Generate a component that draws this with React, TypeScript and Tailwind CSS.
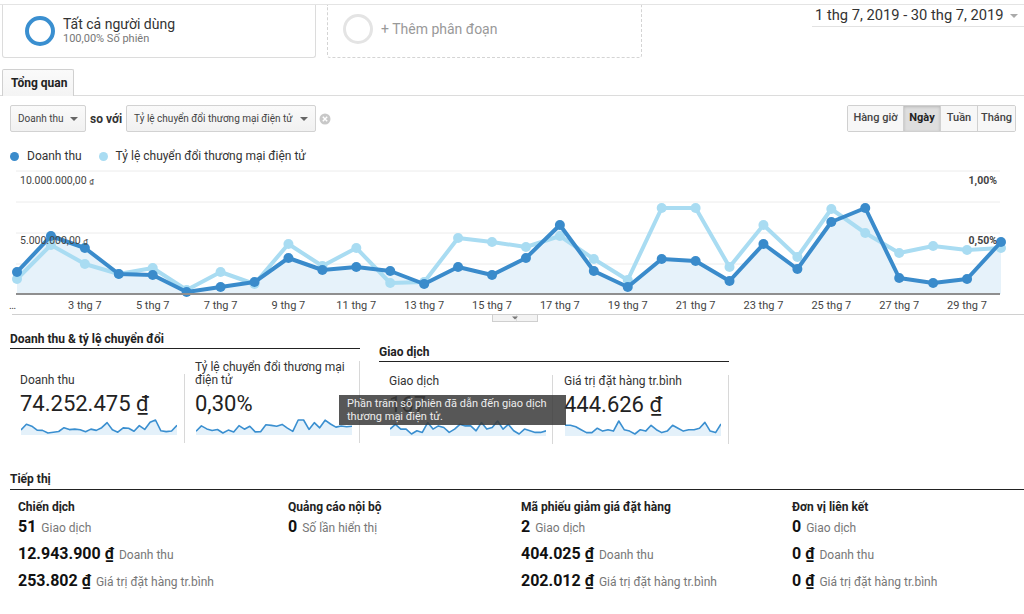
import React from 'react';

// daily points of the main chart, in page pixels (y)
const revenueY = [272, 236, 248, 274, 275, 292, 287, 282, 258, 270, 267, 271, 284, 267, 275, 258, 225, 271, 287, 259, 261, 281, 244, 269, 222, 208, 278, 283, 279, 242];
const rateY = [279, 245, 264, 274, 268, 290, 272, 284, 244, 266, 248, 283, 282, 238, 242, 247, 236, 259, 280, 208, 208, 267, 225, 257, 209, 233, 253, 246, 250, 248];

const TOP = 165;
const xAt = (i: number) => 17 + i * 33.93;

const sparkRevenue = revenueY.map((y) => 300 - y);
const sparkRate = rateY.map((y) => 300 - y);
const sparkTx = [6, 9, 6, 6, 3, 5, 4, 10, 6, 8, 7, 4, 6, 9, 8, 8, 5, 10, 6, 7, 11, 6, 9, 5, 3, 6, 5, 4, 4, 5];
const sparkAov = [9, 9, 8, 6, 4, 4, 7, 5, 6, 5, 12, 6, 5, 3, 6, 5, 9, 6, 4, 5, 9, 7, 5, 6, 6, 7, 11, 5, 4, 10];

const Sparkline = ({ data }: { data: number[] }) => {
  const w = 156;
  const h = 18;
  const min = Math.min(...data);
  const max = Math.max(...data);
  const pts = data.map((v, i) => {
    const x = (i / (data.length - 1)) * w;
    const y = h - 2 - ((v - min) / (max - min)) * (h - 5);
    return `${x.toFixed(1)},${y.toFixed(1)}`;
  });
  return (
    <svg width={w} height={h} className="ml-[1px] block">
      <polygon points={`0,${h} ${pts.join(' ')} ${w},${h}`} fill="#e4f1fa" />
      <polyline points={pts.join(' ')} fill="none" stroke="#3a8fd0" strokeWidth="1.6" strokeLinejoin="round" />
    </svg>
  );
};

const Caret = ({ color = 'border-t-[#666]' }: { color?: string }) => (
  <span className={`inline-block h-0 w-0 shrink-0 border-x-[4px] border-t-[4px] border-x-transparent ${color}`} />
);

const Select = ({ label, width }: { label: string; width: string }) => (
  <div className={`flex h-[27px] shrink-0 items-center justify-between whitespace-nowrap rounded-[2px] border border-[#d2d2d2] bg-gradient-to-b from-[#fafafa] to-[#f1f1f1] pl-[7px] pr-[7px] text-[10px] text-[#444] ${width}`}>
    <span>{label}</span>
    <Caret />
  </div>
);

const Scorecard = ({ label, value, data, className }: { label: React.ReactNode; value: string; data: number[]; className: string }) => (
  <div className={`flex flex-col border-r border-[#d8d8d8] pb-[8px] pl-[10px] ${className}`}>
    <div className="whitespace-nowrap text-[12px] leading-[13px] text-[#333]">{label}</div>
    <div className="mt-[4px] whitespace-nowrap text-[22px] leading-[26px] text-[#222]">{value}</div>
    <Sparkline data={data} />
  </div>
);

const MarketingColumn = ({ title, rows, width }: { title: string; rows: [string, string][]; width: string }) => (
  <div className={`pl-[8px] ${width}`}>
    <div className="text-[12px] font-bold leading-[14px] text-[#222]">{title}</div>
    {rows.map(([v, l]) => (
      <div key={l} className="flex items-baseline gap-[5px] whitespace-nowrap leading-[26px]">
        <span className="text-[16px] font-bold text-[#111]">{v}</span>
        <span className="text-[12px] text-[#777]">{l}</span>
      </div>
    ))}
  </div>
);

const MainChart = () => {
  const dark = revenueY.map((y, i) => `${xAt(i).toFixed(1)},${y - TOP}`).join(' ');
  const light = rateY.map((y, i) => `${xAt(i).toFixed(1)},${y - TOP}`).join(' ');
  const days = [3, 5, 7, 9, 11, 13, 15, 17, 19, 21, 23, 25, 27, 29];
  return (
    <svg width={1024} height={158} className="block">
      {[6, 37, 68, 99].map((y) => (
        <line key={y} x1={16} x2={1000} y1={y} y2={y} stroke="#ececec" strokeWidth="1" />
      ))}
      <polygon points={`${xAt(0)},129 ${dark} ${xAt(29)},129`} fill="#e6f2fa" />
      <polyline points={light} fill="none" stroke="#a9dcf2" strokeWidth="4" strokeLinejoin="round" />
      {rateY.map((y, i) => (
        <circle key={`l${i}`} cx={xAt(i)} cy={y - TOP} r="5" fill="#a9dcf2" />
      ))}
      <polyline points={dark} fill="none" stroke="#3a8bcb" strokeWidth="4" strokeLinejoin="round" />
      {revenueY.map((y, i) => (
        <circle key={`d${i}`} cx={xAt(i)} cy={y - TOP} r="5" fill="#3a8bcb" />
      ))}
      <line x1={16} x2={1000} y1={129} y2={129} stroke="#8f8f8f" strokeWidth="2" />
      <g fontFamily="Roboto, sans-serif" fontSize="10.5" fill="#444">
        <text x={20} y={19}>10.000.000,00 <tspan fontSize="8">₫</tspan></text>
        <text x={20} y={79}>5.000.000,00 <tspan fontSize="8">₫</tspan></text>
        <text x={997} y={19} textAnchor="end" fontWeight="bold">1,00%</text>
        <text x={997} y={79} textAnchor="end" fontWeight="bold">0,50%</text>
        <text x={9} y={144}>…</text>
        {days.map((d) => (
          <text key={d} x={xAt(d - 1)} y={144} textAnchor="middle" fontSize="11">
            {d} thg 7
          </text>
        ))}
      </g>
      <line x1={12} x2={1024} y1={149.5} y2={149.5} stroke="#d0d0d0" strokeWidth="1" />
      <rect x={492.5} y={149.5} width={45} height={7} fill="#f3f3f3" stroke="#cfcfcf" />
      <line x1={516.5} x2={516.5} y1={150} y2={156} stroke="#dcdcdc" />
      <path d="M512 151.5 L518 151.5 L515 154.5 Z" fill="#777" />
    </svg>
  );
};

const App = () => {
  return (
    <div className="relative h-[614px] w-[1024px] overflow-hidden bg-white font-[Roboto,sans-serif] text-[#333]">
      <div className="h-[4px]" />
      {/* segments + date range */}
      <div className="flex border-t border-[#e4e4e4]">
        <div className="ml-[2px] flex h-[53px] w-[314px] items-center rounded-b-[3px] border border-t-0 border-[#dcdcdc] pl-[22px]">
          <div className="h-[30px] w-[30px] rounded-full border-[4px] border-[#3a8fd0]" />
          <div className="ml-[8px] -mt-[2px]">
            <div className="text-[14px] leading-[16px] text-[#333]">Tất cả người dùng</div>
            <div className="text-[11px] leading-[13px] text-[#777]">100,00% Số phiên</div>
          </div>
        </div>
        <div className="ml-[11px] flex h-[53px] w-[315px] items-center rounded-b-[3px] border border-t-0 border-dashed border-[#d4d4d4] pl-[15px]">
          <div className="-mt-[4px] h-[30px] w-[30px] rounded-full border-[3px] border-[#e4e4e4]" />
          <div className="ml-[8px] -mt-[4px] text-[14px] text-[#999]">+ Thêm phân đoạn</div>
        </div>
        <div className="ml-auto flex h-[22px] w-[212px] items-center justify-between border-b border-[#e2e2e2] pl-[3px] pr-[6px]">
          <span className="whitespace-nowrap text-[14.7px] text-[#333]">1 thg 7, 2019 - 30 thg 7, 2019</span>
          <Caret color="border-t-[#aaa]" />
        </div>
      </div>

      {/* tab */}
      <div className="mt-[11px] flex h-[27px] items-end border-b border-[#dcdcdc]">
        <div className="ml-[2px] -mb-px flex h-[27px] w-[72px] items-center rounded-t-[2px] border border-b-0 border-[#d0d0d0] bg-gradient-to-b from-[#fafafa] to-[#f4f4f4] pl-[8px] text-[12px] font-bold text-[#222]">
          Tổng quan
        </div>
      </div>

      {/* controls */}
      <div className="mt-[9px] flex items-center pl-[10px] pr-[8px]">
        <Select label="Doanh thu" width="w-[76px]" />
        <span className="ml-[4px] mr-[4px] text-[12px] font-bold text-[#333]">so với</span>
        <Select label="Tỷ lệ chuyển đổi thương mại điện tử" width="w-[190px]" />
        <svg width="12" height="12" viewBox="0 0 12 12" className="ml-[3px] shrink-0">
          <circle cx="6" cy="6" r="5.5" fill="#c8c8c8" />
          <path d="M3.8 3.8 L8.2 8.2 M8.2 3.8 L3.8 8.2" stroke="#fff" strokeWidth="1.4" />
        </svg>
        <div className="ml-auto flex h-[27px] overflow-hidden rounded-[2px] border border-[#d0d0d0] text-[11px] font-medium text-[#444]">
          <div className="flex w-[55px] items-center justify-center bg-[#f7f7f7]">Hàng giờ</div>
          <div className="flex w-[37px] items-center justify-center border-l border-[#d0d0d0] bg-[#dedede] font-bold text-[#222] shadow-[inset_0_1px_3px_rgba(0,0,0,0.18)]">Ngày</div>
          <div className="flex w-[37px] items-center justify-center border-l border-[#d0d0d0] bg-[#f7f7f7]">Tuần</div>
          <div className="flex w-[38px] items-center justify-center border-l border-[#d0d0d0] bg-[#f7f7f7]">Tháng</div>
        </div>
      </div>

      {/* legend */}
      <div className="mt-[16px] flex h-[16px] items-center pl-[10px] text-[12px] text-[#333]">
        <span className="h-[9px] w-[9px] rounded-full bg-[#3a8bcb]" />
        <span className="ml-[8px]">Doanh thu</span>
        <span className="ml-[17px] h-[9px] w-[9px] rounded-full bg-[#a9dcf2]" />
        <span className="ml-[8px]">Tỷ lệ chuyển đổi thương mại điện tử</span>
      </div>

      <div className="mt-[1px]">
        <MainChart />
      </div>

      {/* scorecards */}
      <div className="flex items-start pl-[10px]">
        <div className="mt-[10px] w-[350px]">
          <div className="border-b-[1.5px] border-[#222] pb-[2px] text-[12px] font-bold leading-[13px] text-[#222]">
            Doanh thu &amp; tỷ lệ chuyển đổi
          </div>
          <div className="mt-[12px] flex items-end">
            <Scorecard className="w-[175px]" label="Doanh thu" value="74.252.475 ₫" data={sparkRevenue} />
            <Scorecard className="w-[175px]" label={<>Tỷ lệ chuyển đổi thương mại<br />điện tử</>} value="0,30%" data={sparkRate} />
          </div>
        </div>
        <div className="ml-[19px] mt-[23px] w-[350px]">
          <div className="border-b-[1.5px] border-[#222] pb-[2px] text-[12px] font-bold leading-[13px] text-[#222]">Giao dịch</div>
          <div className="mt-[13px] flex">
            <Scorecard className="w-[174px] pl-[9px]" label="Giao dịch" value="167" data={sparkTx} />
            <Scorecard className="w-[176px] pl-[11px]" label="Giá trị đặt hàng tr.bình" value="444.626 ₫" data={sparkAov} />
          </div>
        </div>
      </div>

      {/* tooltip */}
      <div className="absolute left-[339px] top-[395px] h-[30px] w-[227px] bg-[#3a3a3a]/85 px-[8px] pt-[2px] text-[11px] leading-[13px] text-[#eee]">
        Phần trăm số phiên đã dẫn đến giao dịch
        <br />
        thương mại điện tử.
      </div>

      {/* marketing */}
      <div className="mt-[29px] pl-[10px]">
        <div className="border-b-[1.5px] border-[#222] pb-[3px] text-[12px] font-bold leading-[13px] text-[#222]">Tiếp thị</div>
        <div className="mt-[10px] flex">
          <MarketingColumn
            width="w-[270px]"
            title="Chiến dịch"
            rows={[
              ['51', 'Giao dịch'],
              ['12.943.900 ₫', 'Doanh thu'],
              ['253.802 ₫', 'Giá trị đặt hàng tr.bình'],
            ]}
          />
          <MarketingColumn width="w-[233px]" title="Quảng cáo nội bộ" rows={[['0', 'Số lần hiển thị']]} />
          <MarketingColumn
            width="w-[271px]"
            title="Mã phiếu giảm giá đặt hàng"
            rows={[
              ['2', 'Giao dịch'],
              ['404.025 ₫', 'Doanh thu'],
              ['202.012 ₫', 'Giá trị đặt hàng tr.bình'],
            ]}
          />
          <MarketingColumn
            width="w-[230px]"
            title="Đơn vị liên kết"
            rows={[
              ['0', 'Giao dịch'],
              ['0 ₫', 'Doanh thu'],
              ['0 ₫', 'Giá trị đặt hàng tr.bình'],
            ]}
          />
        </div>
      </div>
    </div>
  );
};

export default App;
